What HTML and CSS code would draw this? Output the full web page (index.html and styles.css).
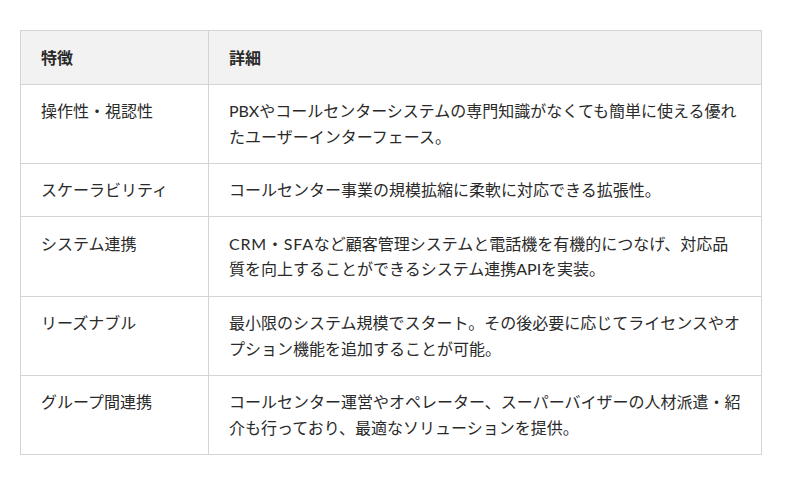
FILE: index.html
```html
<!DOCTYPE html>
<html lang="ja">
<head>
<meta charset="utf-8">
<link rel="stylesheet" href="styles.css">
</head>
<body>
<table class="spec">
  <thead>
    <tr><th class="col-feature">特徴</th><th>詳細</th></tr>
  </thead>
  <tbody>
    <tr><td>操作性・視認性</td><td>PBXやコールセンターシステムの専門知識がなくても簡単に使える優れたユーザーインターフェース。</td></tr>
    <tr><td>スケーラビリティ</td><td>コールセンター事業の規模拡縮に柔軟に対応できる拡張性。</td></tr>
    <tr><td>システム連携</td><td><span class="abbr">CRM・SFA</span>など顧客管理システムと電話機を有機的につなげ、対応品質を向上することができるシステム連携APIを実装。</td></tr>
    <tr><td>リーズナブル</td><td>最小限のシステム規模でスタート。その後必要に応じてライセンスやオプション機能を追加することが可能。</td></tr>
    <tr><td>グループ間連携</td><td>コールセンター運営やオペレーター、スーパーバイザーの人材派遣・紹介も行っており、最適なソリューションを提供。</td></tr>
  </tbody>
</table>
</body>
</html>
```

FILE: styles.css
```css
html, body {
  margin: 0;
  padding: 0;
  background: #ffffff;
}
body {
  padding: 30px 37px 0 20px;
  font-family: Lato, "Noto Sans CJK JP", "Noto Sans", sans-serif;
  font-size: 16px;
  color: #2a2a2a;
}
.spec {
  width: 742px;
  border-collapse: collapse;
  table-layout: fixed;
}
.spec th,
.spec td {
  border: 1px solid #d4d4d4;
  padding: 13.5px 20px;
  line-height: 1.6;
  text-align: left;
  vertical-align: top;
}
.spec th {
  background: #f2f2f2;
  font-weight: bold;
}
.col-feature {
  width: 147px;
}
.abbr {
  letter-spacing: 0.8px;
}
```
